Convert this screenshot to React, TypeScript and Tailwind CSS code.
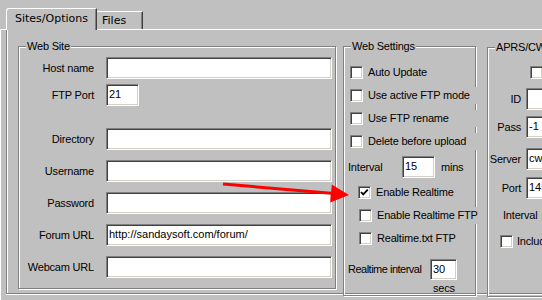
import type { ReactNode } from 'react'

const bevel =
  'border border-t-[#808080] border-l-[#808080] border-b-white border-r-white bg-white shadow-[inset_1px_1px_0_#404040,inset_-1px_-1px_0_#d4d0c8]'

function Edit({ className, value }: { className: string; value?: string }) {
  return (
    <div
      className={`${bevel} ${className} overflow-hidden whitespace-nowrap pl-[2px] leading-[18px] tracking-normal`}
    >
      {value}
    </div>
  )
}

function Check({ checked }: { checked?: boolean }) {
  return (
    <div className={`${bevel} flex h-[13px] w-[13px] shrink-0 items-center justify-center`}>
      {checked && (
        <svg width="9" height="9" viewBox="0 0 9 9">
          <polyline points="1,4 3.2,6.4 7.8,1.6" fill="none" stroke="#000" strokeWidth="1.8" />
        </svg>
      )}
    </div>
  )
}

function Group({ title, className, children }: { title: string; className: string; children: ReactNode }) {
  return (
    <div
      className={`relative border border-[#808080] shadow-[inset_1px_1px_0_#fff,1px_1px_0_#fff] ${className}`}
    >
      <span className="absolute -top-[7px] left-[7px] whitespace-nowrap bg-[#c0c0c0] px-px leading-[13px]">
        {title}
      </span>
      {children}
    </div>
  )
}

function SiteRow({ label, mt, input }: { label: string; mt: string; input: ReactNode }) {
  return (
    <div className={`flex h-[22px] items-center ${mt}`}>
      <span className="w-[75px] text-right">{label}</span>
      <div className="ml-[12px]">{input}</div>
    </div>
  )
}

function CheckRow({
  label,
  mt,
  pl,
  wide,
  checked,
}: {
  label: string
  mt: string
  pl: string
  wide?: boolean
  checked?: boolean
}) {
  return (
    <div className={`flex h-[13px] items-center ${mt} ${pl}`}>
      <Check checked={checked} />
      <span
        className={`ml-[5px] flex h-[17px] shrink-0 items-center whitespace-nowrap ${
          wide ? 'w-[110px] bg-[#c0c0c0]' : ''
        }`}
      >
        {label}
      </span>
    </div>
  )
}

function AprsRow({ label, mt, value }: { label: string; mt: string; value?: string }) {
  return (
    <div className={`flex h-[22px] items-center ${mt}`}>
      <span className="w-[37px] text-right">{label}</span>
      <Edit className="ml-[5px] h-[22px] w-[80px] shrink-0" value={value} />
    </div>
  )
}

export default function App() {
  return (
    <div className="relative flex h-[300px] w-[542px] flex-col overflow-hidden bg-[#c0c0c0] font-['Liberation_Sans',Arial,sans-serif] text-[11px] tracking-[-0.2px] text-black">
      <div className="flex h-[29px] shrink-0 items-end pl-[6px] font-['DejaVu_Sans',Verdana,sans-serif] tracking-normal">
        <div className="relative z-10 -mb-px h-[22px] w-[91px] rounded-tl-[3px] border-l border-t border-r border-white border-r-[#404040] bg-[#c0c0c0] pl-[8px] pt-[3px] leading-[13px] shadow-[inset_-1px_0_0_#808080]">
          Sites/Options
        </div>
        <div className="h-[18px] w-[46px] border-t border-r border-white border-r-[#404040] pl-[5px] pt-[2px] leading-[13px] shadow-[inset_-1px_0_0_#808080]">
          Files
        </div>
      </div>

      <div className="flex min-h-0 flex-1 border-l border-t border-white pl-[5px]">
        <div className="mb-[6px] flex flex-1 border-b border-l border-[#808080] shadow-[inset_1px_0_0_#fff,0_1px_0_#fff]">
          <Group title="Web Site" className="ml-[11px] mt-[16px] h-[243px] w-[318px] shrink-0">
            <div className="flex flex-col pt-[10px]">
              <SiteRow label="Host name" mt="" input={<Edit className="h-[22px] w-[226px]" />} />
              <SiteRow label="FTP Port" mt="mt-[5px]" input={<Edit className="h-[22px] w-[33px]" value="21" />} />
              <SiteRow label="Directory" mt="mt-[22px]" input={<Edit className="h-[22px] w-[226px]" />} />
              <SiteRow label="Username" mt="mt-[10px]" input={<Edit className="h-[22px] w-[226px]" />} />
              <SiteRow label="Password" mt="mt-[10px]" input={<Edit className="h-[22px] w-[226px]" />} />
              <SiteRow
                label="Forum URL"
                mt="mt-[10px]"
                input={<Edit className="h-[22px] w-[226px]" value="http://sandaysoft.com/forum/" />}
              />
              <SiteRow label="Webcam URL" mt="mt-[10px]" input={<Edit className="h-[22px] w-[226px]" />} />
            </div>
          </Group>

          <Group title="Web Settings" className="ml-[7px] mt-[16px] h-[250px] w-[133px] shrink-0">
            <div className="flex flex-col">
              <CheckRow label="Auto Update" mt="mt-[19px]" pl="pl-[6px]" />
              <CheckRow label="Use active FTP mode" mt="mt-[10px]" pl="pl-[6px]" wide />
              <CheckRow label="Use FTP rename" mt="mt-[10px]" pl="pl-[6px]" wide />
              <CheckRow label="Delete before upload" mt="mt-[10px]" pl="pl-[6px]" wide />
              <div className="mt-[8px] flex h-[22px] items-center pl-[4px]">
                <span className="w-[54px]">Interval</span>
                <Edit className="h-[22px] w-[33px]" value="15" />
                <span className="ml-[6px]">mins</span>
              </div>
              <CheckRow label="Enable Realtime" mt="mt-[8px]" pl="pl-[14px]" checked />
              <CheckRow label="Enable Realtime FTP" mt="mt-[10px]" pl="pl-[15px]" wide />
              <CheckRow label="Realtime.txt FTP" mt="mt-[10px]" pl="pl-[15px]" />
              <div className="mt-[14px] flex h-[21px] items-center pl-[4px]">
                <span className="w-[82px] whitespace-nowrap tracking-[-0.5px]">Realtime interval</span>
                <Edit className="h-[21px] w-[27px]" value="30" />
              </div>
              <div className="mt-[2px] pl-[89px] leading-[13px]">secs</div>
            </div>
          </Group>

          <Group title="APRS/CWOP" className="ml-[11px] mt-[17px] h-[250px] w-[120px] shrink-0">
            <div className="flex flex-col">
              <div className="mt-[18px] flex h-[13px] items-center pl-[42px]">
                <Check />
                <span className="ml-[5px] whitespace-nowrap">Enabled</span>
              </div>
              <AprsRow label="ID" mt="mt-[9px]" />
              <AprsRow label="Pass" mt="mt-[6px]" value="-1" />
              <AprsRow label="Server" mt="mt-[10px]" value="cwop.aprs.net" />
              <AprsRow label="Port" mt="mt-[7px]" value="14580" />
              <div className="mt-[5px] flex h-[22px] items-center pl-[15px]">
                <span>Interval</span>
              </div>
              <div className="mt-[9px] flex h-[13px] items-center pl-[12px]">
                <Check />
                <span className="ml-[4px] whitespace-nowrap">Include</span>
              </div>
            </div>
          </Group>
        </div>
      </div>

      <svg className="pointer-events-none absolute left-0 top-0 z-20" width="542" height="300">
        <line x1="223" y1="184" x2="334" y2="193.5" stroke="#ff0000" strokeWidth="3" />
        <polygon points="349,195 331.8,184.4 330.2,202.4" fill="#ff0000" />
      </svg>
    </div>
  )
}
